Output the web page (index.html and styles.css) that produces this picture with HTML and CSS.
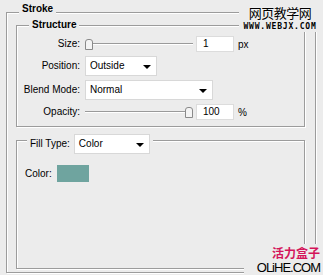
FILE: index.html
```html
<!DOCTYPE html>
<html lang="en">
<head>
<meta charset="UTF-8">
<title>Stroke</title>
<link rel="stylesheet" href="styles.css">
</head>
<body>
<div class="panel">
    <div class="group stroke">
        <div class="title">Stroke</div>

        <!-- Structure block -->
        <div class="group structure">
            <div class="title">Structure</div>
            <div class="rows">
                <div class="row">
                    <span class="label">Size:</span>
                    <span class="slider">
                        <svg class="thumb" width="8" height="11" viewBox="0 0 8 11"><path d="M0.5 3 Q0.5 0.5 3 0.5 L5 0.5 Q7.5 0.5 7.5 3 L7.5 10.5 L0.5 10.5 Z" fill="#f4f4f4" stroke="#8a8a8a"/></svg>
                    </span>
                    <span class="num">1</span>
                    <span class="unit">px</span>
                </div>
                <div class="row tall">
                    <span class="label">Position:</span>
                    <span class="select pos">Outside<i class="arrow"></i></span>
                </div>
                <div class="row tall">
                    <span class="label">Blend Mode:</span>
                    <span class="select blend">Normal<i class="arrow"></i></span>
                </div>
                <div class="row">
                    <span class="label">Opacity:</span>
                    <span class="slider end">
                        <svg class="thumb" width="8" height="11" viewBox="0 0 8 11"><path d="M0.5 3 Q0.5 0.5 3 0.5 L5 0.5 Q7.5 0.5 7.5 3 L7.5 10.5 L0.5 10.5 Z" fill="#f4f4f4" stroke="#8a8a8a"/></svg>
                    </span>
                    <span class="num">100</span>
                    <span class="unit">%</span>
                </div>
            </div>
        </div>

        <!-- Fill block -->
        <div class="group fill">
            <div class="title fill-title">
                <span class="fill-label">Fill Type:</span>
                <span class="select type">Color<i class="arrow"></i></span>
            </div>
            <div class="color-row">
                <span class="color-label">Color:</span>
                <span class="swatch"></span>
            </div>
        </div>
    </div>

    <!-- watermarks -->
    <div class="mark-top">
        <div class="mark-cn">网页教学网</div>
        <div class="mark-url">WWW.WEBJX.COM</div>
    </div>
    <div class="mark-bottom">
        <div class="mark-red">活力盒子</div>
        <div class="mark-com">OLiHE.COM</div>
    </div>
</div>
</body>
</html>
```

FILE: styles.css
```css
body {
    margin: 0;
    padding: 0;
    background-color: #ececec;
    font-family: 'Liberation Sans', Arial, sans-serif;
    font-size: 10px;
    color: #000;
}

.panel {
    position: relative;
    width: 323px;
    height: 275px;
    padding: 12px 0 0 6px;
    box-sizing: border-box;
    overflow: hidden;
}

.group {
    border: 1px solid #9c9c9c;
    box-shadow: 1px 1px 0 #fff, inset 1px 1px 0 #fff;
    box-sizing: border-box;
}

.title {
    width: max-content;
    padding: 0 3px;
    line-height: 13px;
    font-weight: bold;
    background-color: #ececec;
}

/* outer block */
.stroke {
    width: 310px;
    height: 261px;
    padding: 0 10px 0 9px;
}

.stroke > .title {
    margin: -11px 0 0 3px;
}

.structure {
    margin-top: 10px;
}

.structure > .title {
    margin: -8px 0 0 12px;
}

.rows {
    display: flex;
    flex-direction: column;
    gap: 4px;
    padding: 5px 0 6px;
}

.row {
    display: flex;
    align-items: center;
    height: 16px;
}

.row.tall {
    height: 20px;
}

.label {
    width: 63px;
    margin-right: 5px;
    padding-bottom: 2px;
    text-align: right;
}

.slider {
    display: flex;
    align-items: center;
    width: 108px;
    height: 16px;
    background: linear-gradient(to bottom, transparent 7px, #9a9a9a 7px, #9a9a9a 8px, #fff 8px, #fff 9px, transparent 9px);
}

.slider.end {
    justify-content: flex-end;
}

.thumb {
    display: block;
}

.num {
    width: 38px;
    height: 16px;
    margin-left: 3px;
    padding-left: 6px;
    box-sizing: border-box;
    line-height: 14px;
    background-color: #fff;
    border: 1px solid #dcdcdc;
}

.unit {
    margin-left: 4px;
}

.select {
    position: relative;
    display: block;
    height: 20px;
    padding-left: 4px;
    box-sizing: border-box;
    line-height: 18px;
    background-color: #fff;
    border: 1px solid #d8d8d8;
}

.select .arrow {
    position: absolute;
    right: 5px;
    top: 8px;
    width: 0;
    height: 0;
    border-left: 4px solid transparent;
    border-right: 4px solid transparent;
    border-top: 4px solid #000;
}

.select.pos {
    width: 72px;
}

.select.blend {
    width: 128px;
}

.select.type {
    width: 76px;
}

/* fill block */
.fill {
    margin-top: 13px;
    height: 129px;
}

.fill-title {
    display: flex;
    align-items: center;
    margin: -7px 0 0 10px;
    font-weight: normal;
}

.fill-label {
    margin-right: 4px;
    padding-bottom: 2px;
}

.color-row {
    display: flex;
    align-items: center;
    margin-top: 11px;
    padding-left: 8px;
}

.color-label {
    width: 32px;
}

.swatch {
    width: 32px;
    height: 17px;
    background-color: #6fa49f;
}

/* watermarks */
.mark-top {
    position: absolute;
    top: 0;
    right: 2px;
    width: 82px;
    height: 32px;
    background-color: #ececec;
    text-align: center;
}

.mark-cn {
    margin-top: 4px;
    font-family: 'Noto Sans CJK SC', sans-serif;
    font-size: 13px;
    line-height: 17px;
    letter-spacing: -0.5px;
    text-shadow: 0 0 2px #fff;
}

.mark-url {
    margin-top: 1px;
    font-family: 'DejaVu Sans Mono', monospace;
    font-weight: bold;
    font-size: 8px;
    line-height: 9px;
    letter-spacing: 0.8px;
}

.mark-bottom {
    position: absolute;
    right: 3px;
    bottom: 0;
    width: 76px;
    height: 31px;
    background-color: #ececec;
    text-align: right;
}

.mark-red {
    font-family: 'Noto Sans CJK SC', sans-serif;
    font-weight: bold;
    font-size: 12px;
    line-height: 17px;
    color: #d4145a;
}

.mark-com {
    font-family: 'Liberation Sans', sans-serif;
    font-size: 13px;
    line-height: 14px;
    letter-spacing: -1px;
}
```
